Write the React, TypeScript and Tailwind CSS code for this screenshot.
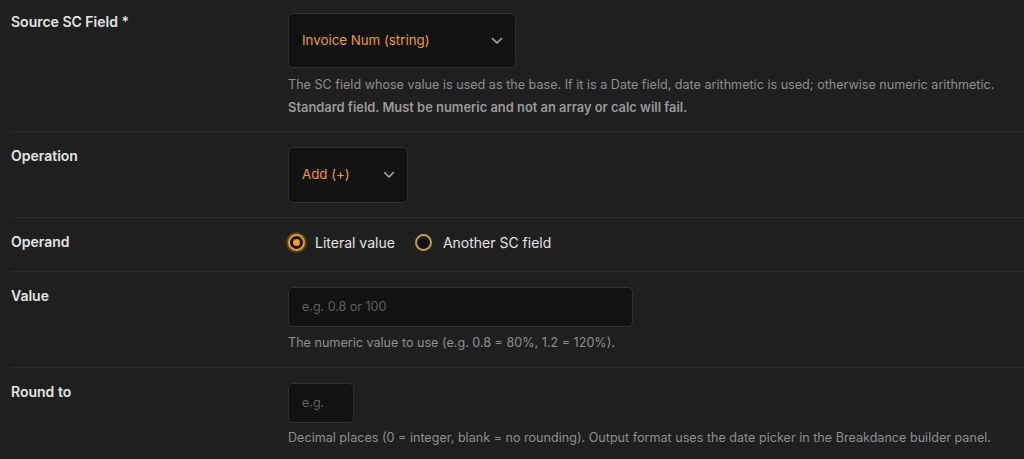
import React from "react";

const Chevron = () => (
  <svg width="12" height="8" viewBox="0 0 12 8" fill="none" className="shrink-0">
    <path d="M1.5 1.5 L6 6 L10.5 1.5" stroke="#a8a8a8" strokeWidth="1.6" strokeLinecap="round" strokeLinejoin="round" />
  </svg>
);

const Label = ({ children }: { children: React.ReactNode }) => (
  <div className="w-[277px] shrink-0 text-[14px] leading-[18px] font-semibold text-[#e4e4e4]">{children}</div>
);

const Help = ({ children, bold = false, first = true }: { children: React.ReactNode; bold?: boolean; first?: boolean }) => (
  <p
    className={`${first ? "mt-[7px]" : "mt-[3px]"} leading-[20px] ${
      bold ? "text-[12.9px] font-semibold text-[#999999]" : "text-[12.6px] text-[#8e8e8e]"
    }`}
  >
    {children}
  </p>
);

export default function App() {
  return (
    <div
      className="w-[1024px] h-[459px] overflow-hidden bg-[#1f1f1f] pl-[11px]"
      style={{ fontFamily: "Inter, 'Noto Sans', sans-serif" }}
    >
      {/* Row 1 */}
      <div className="flex pt-[13px] pb-[13px] border-b border-[#2b2b2b]">
        <Label>Source SC Field *</Label>
        <div className="flex flex-col">
          <div className="w-[228px] h-[55px] rounded-[5px] border border-[#303030] bg-[#121212] flex items-center justify-between pl-[13px] pr-[12px]">
            <span className="text-[13.3px] text-[#f09a2c]">Invoice Num (string)</span>
            <Chevron />
          </div>
          <Help>The SC field whose value is used as the base. If it is a Date field, date arithmetic is used; otherwise numeric arithmetic.</Help>
          <Help bold first={false}>Standard field. Must be numeric and not an array or calc will fail.</Help>
        </div>
      </div>

      {/* Row 2 */}
      <div className="flex pt-[15px] pb-[14px] border-b border-[#2b2b2b]">
        <Label>Operation</Label>
        <div className="w-[120px] h-[56px] rounded-[5px] border border-[#303030] bg-[#121212] flex items-center justify-between pl-[13px] pr-[12px]">
          <span className="text-[13.3px] text-[#f09a2c]">Add (+)</span>
          <Chevron />
        </div>
      </div>

      {/* Row 3 */}
      <div className="flex items-center pt-[15px] pb-[20px] border-b border-[#2b2b2b]">
        <Label>Operand</Label>
        <div className="flex items-center h-[18px] text-[14px] text-[#e4e4e4]">
          <span className="w-[17px] h-[17px] rounded-full border-2 border-[#f09a2c] bg-[#121212] flex items-center justify-center shadow-[0_0_0_2px_rgba(240,154,44,0.25)]">
            <span className="w-[7px] h-[7px] rounded-full bg-[#f09a2c]" />
          </span>
          <span className="ml-[10px]">Literal value</span>
          <span className="ml-[20px] w-[17px] h-[17px] rounded-full border-2 border-[#d09a40] bg-[#121212]" />
          <span className="ml-[11px]">Another SC field</span>
        </div>
      </div>

      {/* Row 4 */}
      <div className="flex pt-[15px] pb-[14px] border-b border-[#2b2b2b]">
        <Label>Value</Label>
        <div className="flex flex-col">
          <div className="w-[345px] h-[40px] rounded-[5px] border border-[#303030] bg-[#121212] flex items-center pl-[13px]">
            <span className="text-[12.5px] text-[#5f5f5f]">e.g. 0.8 or 100</span>
          </div>
          <p className="mt-[6px] text-[12.6px] leading-[20px] text-[#8e8e8e]">The numeric value to use (e.g. 0.8 = 80%, 1.2 = 120%).</p>
        </div>
      </div>

      {/* Row 5 */}
      <div className="flex pt-[15px] pb-[14px]">
        <Label>Round to</Label>
        <div className="flex flex-col">
          <div className="w-[66px] h-[40px] rounded-[5px] border border-[#303030] bg-[#121212] flex items-center pl-[13px]">
            <span className="text-[12.5px] text-[#5f5f5f]">e.g.</span>
          </div>
          <p className="mt-[5px] text-[12.6px] leading-[20px] text-[#8e8e8e]">
            Decimal places (0 = integer, blank = no rounding). Output format uses the date picker in the Breakdance builder panel.
          </p>
        </div>
      </div>
    </div>
  );
}
